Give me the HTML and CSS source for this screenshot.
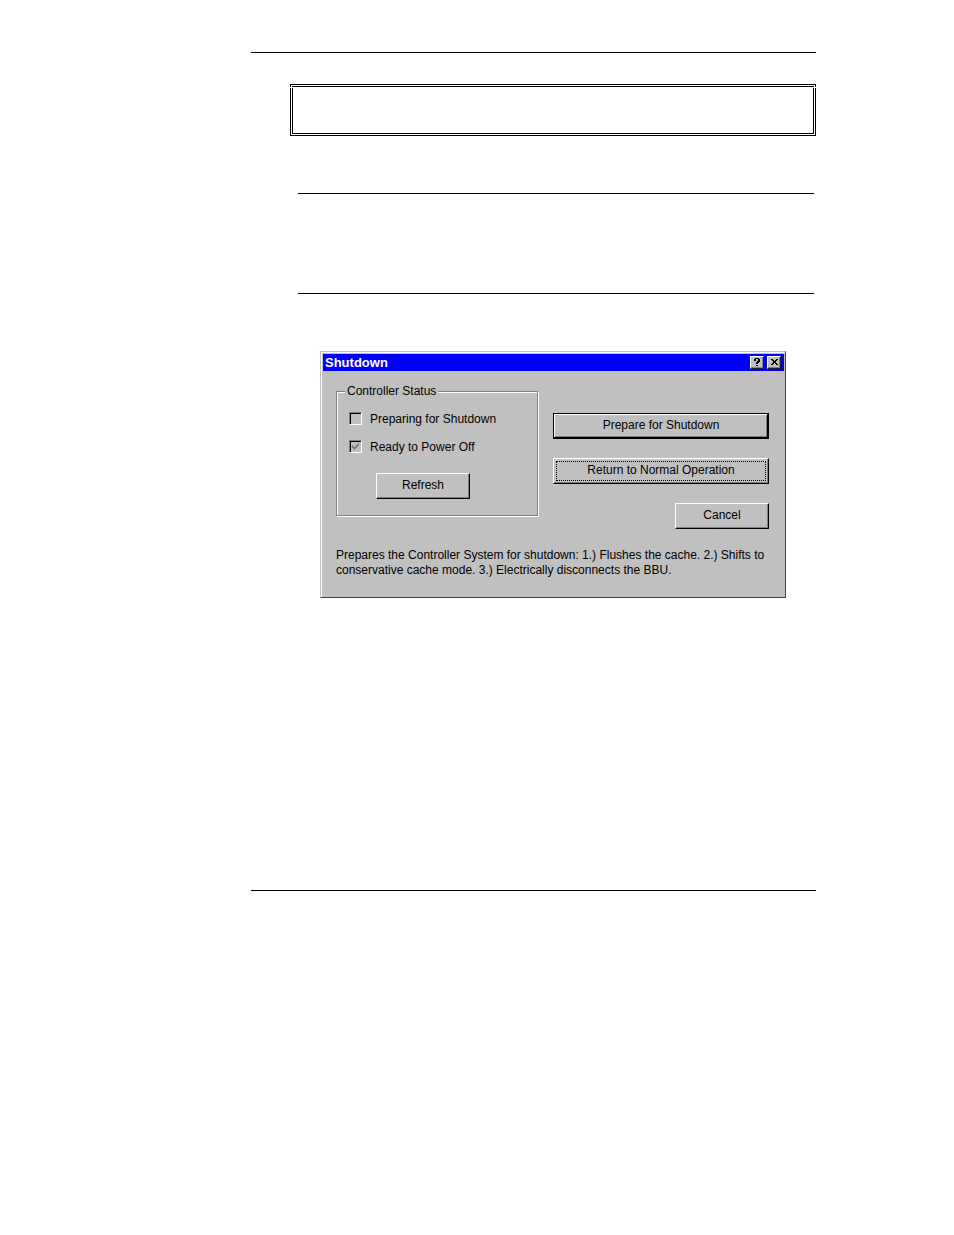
FILE: index.html
```html
<!DOCTYPE html>
<html lang="en">
<head>
<meta charset="utf-8">
<title>Shutdown</title>
<link rel="stylesheet" href="styles.css">
</head>
<body>
<main class="page">
  <div class="note-box"></div>
  <div class="caution"></div>
  <section class="dialog" role="dialog" aria-labelledby="dialog-title">
    <header class="titlebar">
      <h1 class="title" id="dialog-title">Shutdown</h1>
      <button class="tool" type="button" aria-label="Help">
        <svg class="glyph" viewBox="0 0 10 9" shape-rendering="crispEdges"><path d="M3 0h4v1h1v3h-1v1h-1v1h-2v-2h1v-1h1v-2h-2v2h-2v-2h1zM4 7h2v1h-2z"/></svg>
      </button>
      <button class="tool" type="button" aria-label="Close">
        <svg class="glyph" viewBox="0 0 10 9" shape-rendering="crispEdges"><path d="M2 1h2v1h1v1h1v-1h1v-1h2v1h-1v1h-1v2h1v1h1v1h-2v-1h-1v-1h-1v1h-1v1h-2v-1h1v-1h1v-2h-1v-1h-1z"/></svg>
      </button>
    </header>
    <div class="body">
      <fieldset class="group">
        <legend class="legend">Controller Status</legend>
        <label class="option"><span class="tick"><input class="box" type="checkbox"></span>Preparing for Shutdown</label>
        <label class="option"><span class="tick"><input class="box" type="checkbox" checked><svg class="mark" viewBox="0 0 9 9" shape-rendering="crispEdges"><path d="M1 3h1v1h1v1h1v-1h1v-1h1v-1h1v-1h1v3h-1v1h-1v1h-1v1h-1v1h-1v-1h-1v-1h-1z"/></svg></span>Ready to Power Off</label>
        <button class="btn small refresh" type="button">Refresh</button>
      </fieldset>
      <div class="actions">
        <button class="btn default" type="button">Prepare for Shutdown</button>
        <button class="btn focused" type="button">Return to Normal Operation</button>
        <button class="btn small cancel" type="button">Cancel</button>
      </div>
      <p class="message">Prepares the Controller System for shutdown: 1.) Flushes the cache. 2.) Shifts to<br>conservative cache mode. 3.) Electrically disconnects the BBU.</p>
    </div>
  </section>
</main>
</body>
</html>
```
FILE: styles.css
```css
* { box-sizing: border-box; }

body {
  margin: 0;
  background: #fff;
  color: #000;
  font: 12px/15px "Liberation Sans", Arial, sans-serif;
}

.page {
  margin: 52px 138px 0 251px;
  padding: 31px 0 292px 39px;
  border-top: 1px solid #000;
  border-bottom: 1px solid #000;
}

.note-box {
  position: relative;
  height: 52px;
  border: 3px double #000;
}

/* break in the side rules under the top rule */
.note-box::before {
  content: "";
  position: absolute;
  top: 0;
  left: -3px;
  right: -3px;
  height: 1px;
  background: #fff;
}

.caution {
  height: 101px;
  margin: 57px 2px 57px 8px;
  border-top: 1px solid #000;
  border-bottom: 1px solid #000;
}

.dialog {
  max-width: 466px;
  margin-left: 30px;
  padding: 2px 1px 0 2px;
  background: #c0c0c0;
  border: 1px solid;
  border-color: #c0c0c0 #404040 #404040 #c0c0c0;
  box-shadow: inset 1px 1px #fff;
}

.titlebar {
  display: flex;
  align-items: center;
  gap: 3px;
  height: 17px;
  padding: 0 3px 0 2px;
  background: #00f;
}

.title {
  flex: 1;
  margin: 0;
  color: #fff;
  font-size: 13px;
  line-height: 17px;
}

.tool {
  display: grid;
  place-items: center;
  width: 14px;
  height: 13px;
  padding: 0;
  background: #c0c0c0;
  border: 1px solid;
  border-color: #fff #202020 #202020 #fff;
  box-shadow: inset -1px -1px #808080;
}

.glyph { width: 10px; height: 9px; }

.body {
  display: grid;
  grid-template-columns: 202px 1fr;
  column-gap: 15px;
  padding: 13px 15px 19px 13px;
}

.group {
  display: flex;
  flex-direction: column;
  gap: 13px;
  min-width: 0;
  height: 132px;
  margin: 0;
  padding: 13px 12px 0;
  border: 1px solid #808080;
  box-shadow: 1px 1px #fff, inset 1px 1px #fff;
}

.legend {
  margin-left: -4px;
  padding: 0 2px;
  background: #c0c0c0;
}

.option {
  display: flex;
  align-items: flex-start;
  gap: 8px;
}

.tick {
  position: relative;
  display: block;
  width: 13px;
  height: 13px;
}

.box {
  display: block;
  appearance: none;
  width: 13px;
  height: 13px;
  margin: 0;
  border: 1px solid;
  border-color: #808080 #fff #fff #808080;
  box-shadow: inset 1px 1px #000;
}

.mark {
  position: absolute;
  top: 2px;
  left: 2px;
  width: 9px;
  height: 9px;
  fill: #808080;
  pointer-events: none;
}

.btn {
  height: 26px;
  padding: 0 0 2px;
  background: #c0c0c0;
  color: #000;
  font: inherit;
  border: 1px solid;
  border-color: #fff #000 #000 #fff;
  box-shadow: inset -1px -1px #808080;
}

.small { width: 94px; }

.refresh { margin: 5px 0 0 27px; }

.default {
  border-color: #000;
  box-shadow: inset -1px -1px #000, inset 1px 1px #fff, inset -2px -2px #808080;
}

.focused {
  outline: 1px dotted #000;
  outline-offset: -4px;
}

.actions {
  display: flex;
  flex-direction: column;
  gap: 19px;
  padding-top: 29px;
}

.cancel { align-self: flex-end; }

.message {
  grid-column: 1 / -1;
  margin: 19px 0 0;
  white-space: nowrap;
}
```
